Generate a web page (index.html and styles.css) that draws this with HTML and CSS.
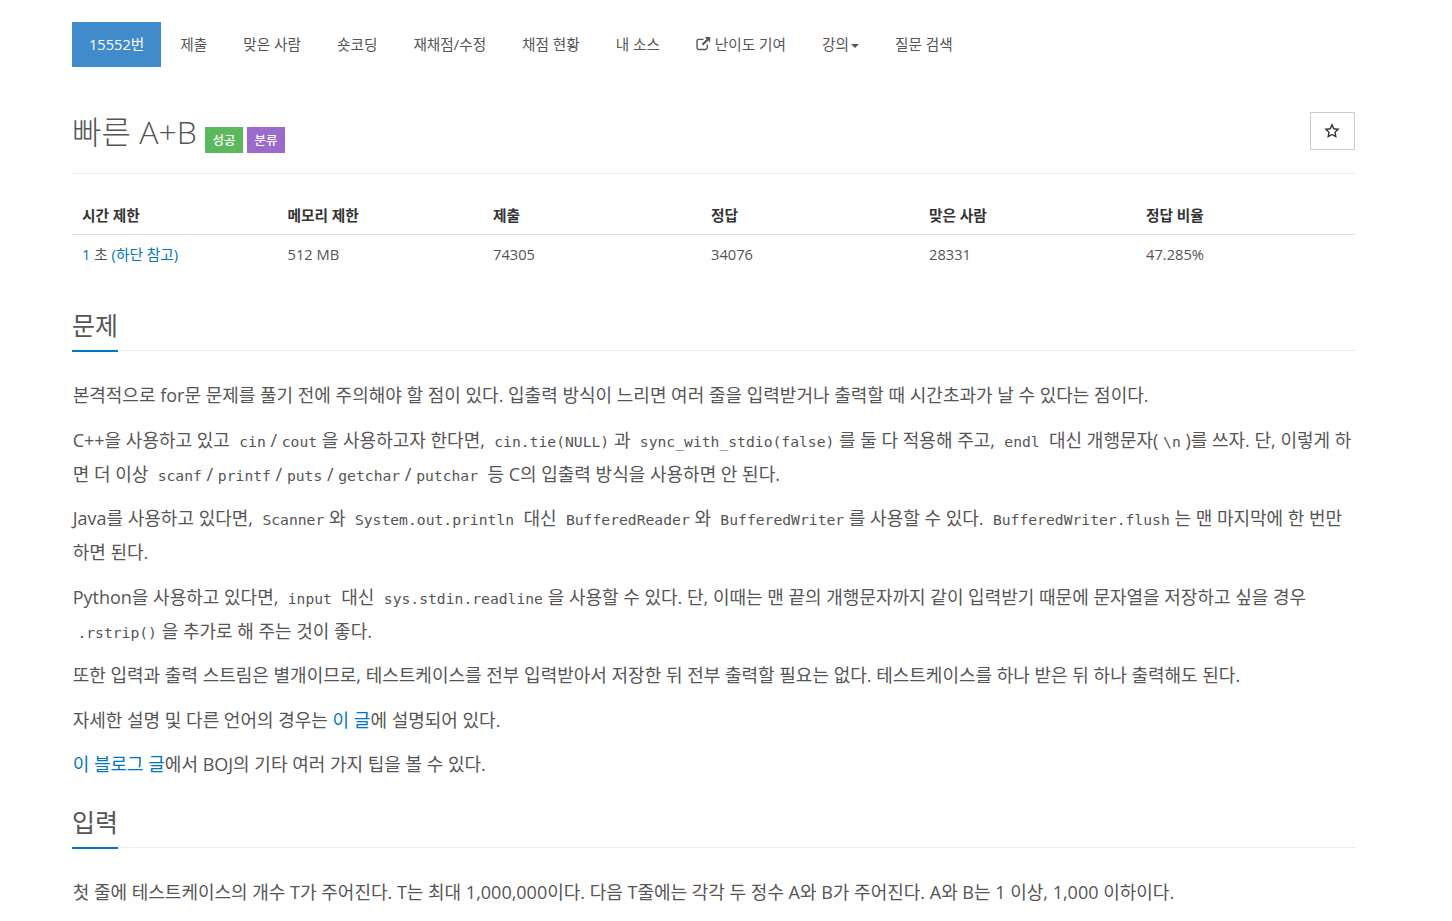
FILE: index.html
```html
<!DOCTYPE html>
<html lang="ko">
<head>
<meta charset="utf-8">
<title>빠른 A+B</title>
<link rel="stylesheet" href="styles.css">
</head>
<body>
<div class="container">
  <ul class="nav">
    <li class="active"><a href="#">15552번</a></li>
    <li><a href="#">제출</a></li>
    <li><a href="#">맞은 사람</a></li>
    <li><a href="#">숏코딩</a></li>
    <li><a href="#">재채점/수정</a></li>
    <li><a href="#">채점 현황</a></li>
    <li><a href="#">내 소스</a></li>
    <li><a href="#"><svg class="ext-icon" viewBox="0 0 14 14" width="15" height="15"><path d="M10.5 8v3a1.6 1.6 0 0 1-1.6 1.6H2.6A1.6 1.6 0 0 1 1 11V4.700a1.600 1.600 0 0 1 1.600-1.600H7" fill="none" stroke="#555" stroke-width="1.300"/><path d="M8.200 1h5v5l-1.800-1.800-4.700 4.700-1.400-1.400 4.700-4.700z" fill="#555"/></svg> 난이도 기여</a></li>
    <li><a href="#">강의<span class="caret"></span></a></li>
    <li><a href="#">질문 검색</a></li>
  </ul>

  <div class="title-row">
    <h1 class="page-title">빠른 A+B <span class="label green">성공</span><span class="label purple">분류</span></h1>
    <button class="star-btn" type="button"><svg viewBox="0 0 16 16" width="16" height="16"><path d="M8 1.800l1.850 3.950 4.300.55-3.150 3 .8 4.300L8 11.500l-3.800 2.100.8-4.300-3.150-3 4.300-.55z" fill="none" stroke="#333" stroke-width="1.400" stroke-linejoin="miter"/></svg></button>
  </div>

  <table class="info">
    <thead>
      <tr><th class="c1">시간 제한</th><th class="c2">메모리 제한</th><th class="c3">제출</th><th class="c4">정답</th><th class="c5">맞은 사람</th><th>정답 비율</th></tr>
    </thead>
    <tbody>
      <tr><td><a href="#">1</a> 초 <a href="#">(하단 참고)</a></td><td>512 MB</td><td>74305</td><td>34076</td><td>28331</td><td>47.285%</td></tr>
    </tbody>
  </table>

  <section class="problem-sec first">
    <h2 class="sec-head"><span>문제</span></h2>
    <div class="sec-body">
      <p>본격적으로 for문 문제를 풀기 전에 주의해야 할 점이 있다. 입출력 방식이 느리면 여러 줄을 입력받거나 출력할 때 시간초과가 날 수 있다는 점이다.</p>
      <p>C++을 사용하고 있고 <code>cin</code>/<code>cout</code>을 사용하고자 한다면, <code>cin.tie(NULL)</code>과 <code>sync_with_stdio(false)</code>를 둘 다 적용해 주고, <code>endl</code> 대신 개행문자(<code>\n</code>)를 쓰자. 단, 이렇게 하면 더 이상 <code>scanf</code>/<code>printf</code>/<code>puts</code>/<code>getchar</code>/<code>putchar</code> 등 C의 입출력 방식을 사용하면 안 된다.</p>
      <p>Java를 사용하고 있다면, <code>Scanner</code>와 <code>System.out.println</code> 대신 <code>BufferedReader</code>와 <code>BufferedWriter</code>를 사용할 수 있다. <code>BufferedWriter.flush</code>는 맨 마지막에 한 번만 하면 된다.</p>
      <p>Python을 사용하고 있다면, <code>input</code> 대신 <code>sys.stdin.readline</code>을 사용할 수 있다. 단, 이때는 맨 끝의 개행문자까지 같이 입력받기 때문에 문자열을 저장하고 싶을 경우 <code>.rstrip()</code>을 추가로 해 주는 것이 좋다.</p>
      <p>또한 입력과 출력 스트림은 별개이므로, 테스트케이스를 전부 입력받아서 저장한 뒤 전부 출력할 필요는 없다. 테스트케이스를 하나 받은 뒤 하나 출력해도 된다.</p>
      <p>자세한 설명 및 다른 언어의 경우는 <a href="#">이 글</a>에 설명되어 있다.</p>
      <p><a href="#">이 블로그 글</a>에서 BOJ의 기타 여러 가지 팁을 볼 수 있다.</p>
    </div>
  </section>

  <section class="problem-sec">
    <h2 class="sec-head"><span>입력</span></h2>
    <div class="sec-body">
      <p>첫 줄에 테스트케이스의 개수 T가 주어진다. T는 최대 1,000,000이다. 다음 T줄에는 각각 두 정수 A와 B가 주어진다. A와 B는 1 이상, 1,000 이하이다.</p>
    </div>
  </section>
</div>
</body>
</html>
```
FILE: styles.css
```css
* { box-sizing: border-box; }
html, body { height: 921px; overflow: hidden; }
body {
  margin: 0;
  background: #fff;
  color: #555;
  font-family: "Open Sans", "Noto Sans CJK KR", sans-serif;
  font-size: 14.700px;
  line-height: 20px;
}
a { color: #0076c0; text-decoration: none; }
.container { width: 1283px; margin-left: 72px; }

.nav {
  display: flex;
  list-style: none;
  margin: 0;
  padding: 22px 0 0;
  font-size: 14.650px;
}
.nav li + li { margin-left: 2px; }
.nav li a {
  display: block;
  height: 45px;
  padding: 12px 17px 0;
  color: #555;
  white-space: nowrap;
}
.nav li.active a { background: #428bca; color: #fff; }
.ext-icon { vertical-align: -1px; }
.caret {
  display: inline-block;
  margin-left: 2px;
  vertical-align: middle;
  border-top: 4px solid #555;
  border-left: 4px solid transparent;
  border-right: 4px solid transparent;
}

.title-row {
  display: flex;
  justify-content: space-between;
  align-items: flex-start;
  margin-top: 45px;
  height: 62px;
  border-bottom: 1px solid #eee;
}
.page-title {
  margin: 0;
  font-size: 32px;
  font-weight: 300;
  line-height: 40px;
  color: #555;
}
.label {
  display: inline-block;
  height: 26px;
  padding: 0 7.500px;
  font-size: 12.500px;
  line-height: 27px;
  font-weight: 500;
  color: #fff;
  vertical-align: -1px;
}
.purple { margin-left: 4px; }
.green { background: #5cb85c; }
.purple { background: #9b6bcc; }
.star-btn {
  display: flex;
  align-items: center;
  justify-content: center;
  width: 45px;
  height: 38px;
  padding: 0 1px 1px 0;
  background: #fff;
  border: 1px solid #ccc;
}

.info {
  width: 100%;
  margin-top: 21px;
  border-collapse: collapse;
  table-layout: fixed;
}
.info th {
  padding: 10px 10px 9px;
  text-align: left;
  color: #333;
  font-weight: 700;
  border-bottom: 1px solid #ddd;
  line-height: 20px;
}
.info td { padding: 9px 10px 10px; color: #555; }
.c1 { width: 205.500px; }
.c2 { width: 205.500px; }
.c3 { width: 218px; }
.c4 { width: 218px; }
.c5 { width: 217px; }

.problem-sec.first { margin-top: 26px; }
.problem-sec { margin-top: 15.200px; }
.sec-head {
  margin: 0;
  height: 51px;
  border-bottom: 1px dotted #ddd;
  font-size: 25px;
  font-weight: 400;
  line-height: 38px;
  color: #555;
  padding-top: 6px;
}
.sec-head span {
  display: inline-block;
  height: 46px;
  border-bottom: 2px solid #0076c0;
}
.sec-body { margin-top: 27.200px; padding-left: 0.700px; font-size: 18px; line-height: 34px; }
.sec-body p { margin: 0 0 10.550px; }
code {
  font-family: "DejaVu Sans Mono", monospace;
  font-size: 14.700px;
  line-height: 1;
  padding: 0 4.700px;
}
```
